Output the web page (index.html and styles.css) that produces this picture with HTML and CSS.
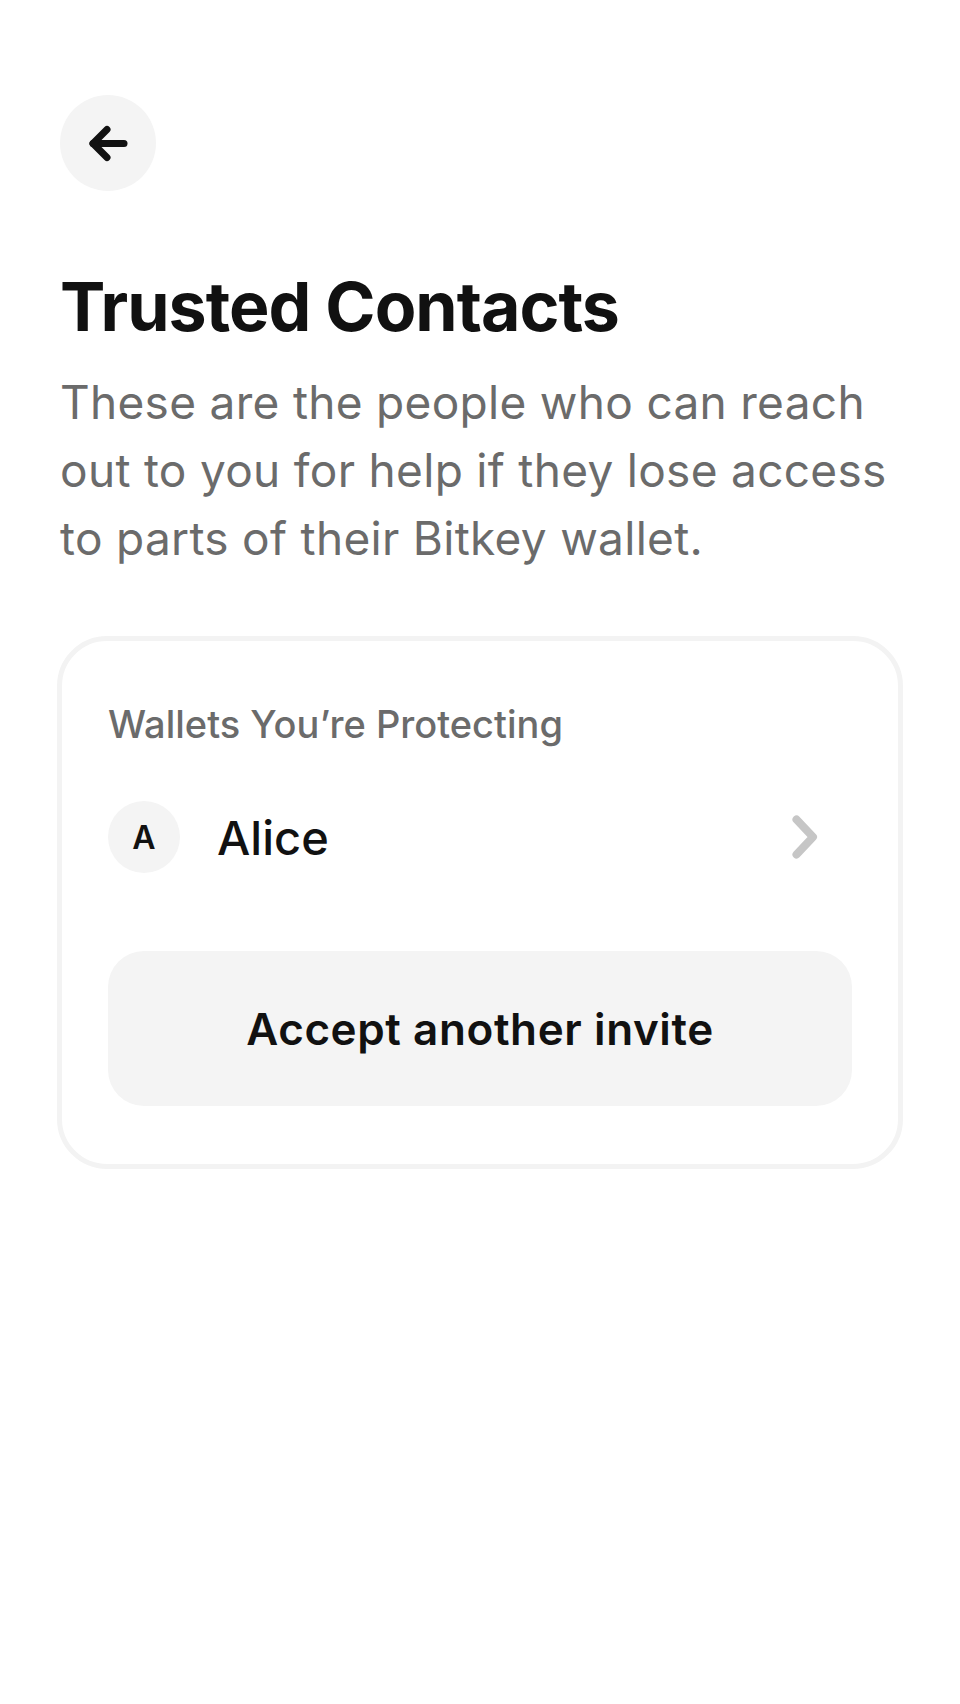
FILE: index.html
```html
<!DOCTYPE html>
<html lang="en">
<head>
<meta charset="utf-8">
<title>Trusted Contacts</title>
<link rel="stylesheet" href="styles.css">
</head>
<body>
<main class="screen">
  <button class="back-btn" aria-label="Back">
    <svg width="96" height="96" viewBox="0 0 96 96" fill="none" stroke="#111111" stroke-width="7" stroke-linecap="round" stroke-linejoin="round">
      <path d="M33 48.5 H64"/>
      <path d="M47 34.5 L33 48.5 L47 62.5"/>
    </svg>
  </button>
  <h1 class="title">Trusted Contacts</h1>
  <p class="subtitle">These are the people who can reach out to you for help if they lose access to parts of their Bitkey wallet.</p>

  <section class="card">
    <h2 class="card-label">Wallets You’re Protecting</h2>
    <div class="contact-row">
      <div class="avatar">A</div>
      <div class="contact-name">Alice</div>
      <svg class="chevron" width="26" height="44" viewBox="0 0 26 44" fill="none" stroke="#c6c6c6" stroke-width="8" stroke-linecap="round" stroke-linejoin="round">
        <path d="M4.5 4.5 L21 22 L4.5 39.5"/>
      </svg>
    </div>
    <button class="invite-btn">Accept another invite</button>
  </section>
</main>
</body>
</html>
```

FILE: styles.css
```css
* { box-sizing: border-box; }

html, body {
  margin: 0;
  padding: 0;
  background: #ffffff;
}

body {
  font-family: Inter, "Noto Sans", "Liberation Sans", sans-serif;
  color: #111111;
}

.screen {
  width: 960px;
  min-height: 1704px;
  padding: 95px 60px 0 60px;
  display: flex;
  flex-direction: column;
  align-items: flex-start;
}

.back-btn {
  width: 96px;
  height: 96px;
  border-radius: 50%;
  border: none;
  padding: 0;
  margin: 0;
  background: #f4f4f4;
  display: flex;
  align-items: center;
  justify-content: center;
}

.back-btn svg { display: block; }

.title {
  margin: 75px 0 0 0;
  font-size: 68px;
  line-height: 80px;
  font-weight: 700;
  letter-spacing: -1px;
  color: #111111;
}

.subtitle {
  margin: 22px 0 0 0;
  font-size: 46px;
  line-height: 68px;
  font-weight: 400;
  letter-spacing: 0.3px;
  color: #6b6b6b;
}

.card {
  margin: 64px 0 0 -3px;
  width: 846px;
  border: 5px solid #f3f3f3;
  border-radius: 50px;
  padding: 61px 46px 58px 46px;
  display: flex;
  flex-direction: column;
}

.card-label {
  margin: 0;
  font-size: 38px;
  line-height: 44px;
  font-weight: 500;
  color: #6b6b6b;
}

.contact-row {
  margin-top: 55px;
  height: 72px;
  display: flex;
  align-items: center;
}

.avatar {
  width: 72px;
  height: 72px;
  border-radius: 50%;
  background: #f4f4f4;
  display: flex;
  align-items: center;
  justify-content: center;
  font-size: 32px;
  font-weight: 600;
  color: #111111;
  flex: none;
}

.contact-name {
  margin-left: 37px;
  flex: 1;
  font-size: 47px;
  font-weight: 500;
  color: #111111;
}

.chevron {
  flex: none;
  margin-right: 34px;
}

.invite-btn {
  margin-top: 78px;
  height: 155px;
  width: 100%;
  border: none;
  border-radius: 36px;
  background: #f4f4f4;
  font-family: inherit;
  font-size: 44px;
  font-weight: 600;
  letter-spacing: 0.6px;
  color: #111111;
  padding: 0;
}
```
